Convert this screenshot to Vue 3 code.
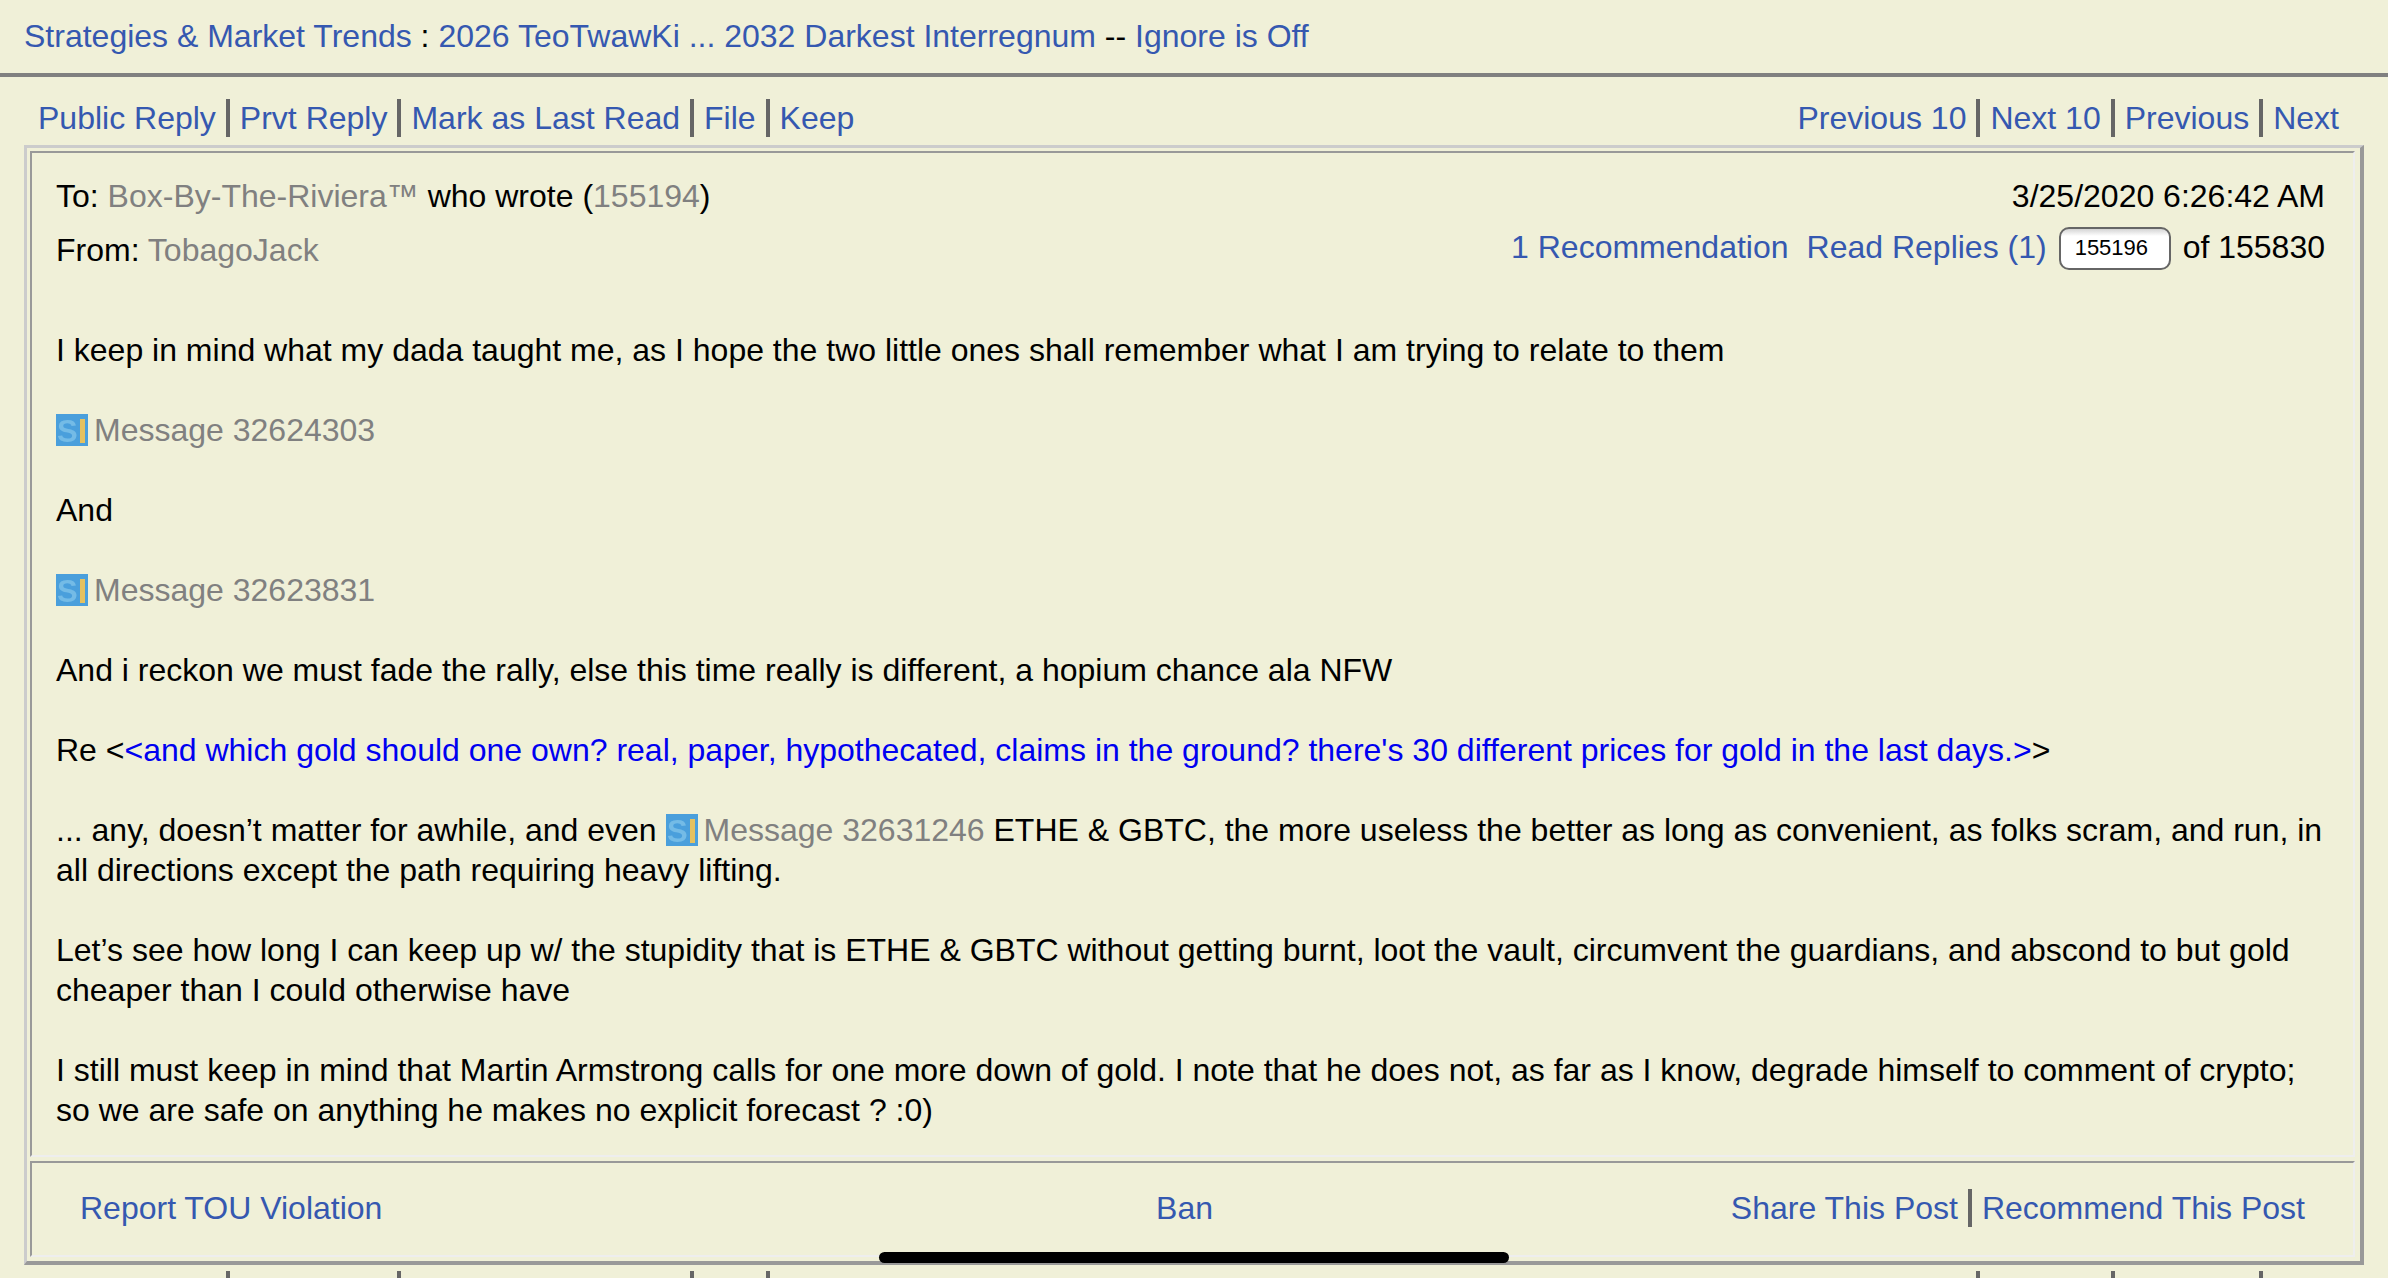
<script setup>
const leftLinks = ['Public Reply', 'Prvt Reply', 'Mark as Last Read', 'File', 'Keep']
const rightLinks = ['Previous 10', 'Next 10', 'Previous', 'Next']
</script>

<template>
  <div class="page">
    <header class="title">
      <a>Strategies &amp; Market Trends</a> : <a>2026 TeoTwawKi ... 2032 Darkest Interregnum</a> -- <a>Ignore is Off</a>
    </header>

    <nav class="toolbar">
      <div class="links">
        <template v-for="(l, i) in leftLinks" :key="l">
          <i v-if="i" class="sep"></i><a>{{ l }}</a>
        </template>
      </div>
      <div class="links">
        <template v-for="(l, i) in rightLinks" :key="l">
          <i v-if="i" class="sep"></i><a>{{ l }}</a>
        </template>
      </div>
    </nav>

    <section class="box">
      <article class="cell message">
        <div class="meta">
          <div class="meta-left">
            <div class="to">To: <span class="gray">Box-By-The-Riviera™</span> who wrote (<span class="gray">155194</span>)</div>
            <div class="from">From: <span class="gray">TobagoJack</span></div>
          </div>
          <div class="meta-right">
            <div class="date">3/25/2020 6:26:42 AM</div>
            <div class="rec">
              <a>1 Recommendation</a>
              <a class="replies">Read Replies (1)</a>
              <input class="msgno" value="155196" readonly />
              <span>of 155830</span>
            </div>
          </div>
        </div>

        <div class="body">
          <p>I keep in mind what my dada taught me, as I hope the two little ones shall remember what I am trying to relate to them</p>
          <p><svg class="si" viewBox="0 0 32 32"><rect width="32" height="32" fill="#4a9fdc"/><g class="si-g"><text x="1" y="28" class="si-s">S</text><rect x="24" y="5" width="5" height="24" fill="#e5c15f"/></g></svg><span class="gray">Message 32624303</span></p>
          <p>And</p>
          <p><svg class="si" viewBox="0 0 32 32"><rect width="32" height="32" fill="#4a9fdc"/><g class="si-g"><text x="1" y="28" class="si-s">S</text><rect x="24" y="5" width="5" height="24" fill="#e5c15f"/></g></svg><span class="gray">Message 32623831</span></p>
          <p>And i reckon we must fade the rally, else this time really is different, a hopium chance ala NFW</p>
          <p>Re &lt;<span class="quote">&lt;and which gold should one own? real, paper, hypothecated, claims in the ground? there's 30 different prices for gold in the last days.&gt;</span>&gt;</p>
          <p>... any, doesn’t matter for awhile, and even <svg class="si" viewBox="0 0 32 32"><rect width="32" height="32" fill="#4a9fdc"/><g class="si-g"><text x="1" y="28" class="si-s">S</text><rect x="24" y="5" width="5" height="24" fill="#e5c15f"/></g></svg><span class="gray">Message 32631246</span> ETHE &amp; GBTC, the more useless the better as long as convenient, as folks scram, and run, in all directions except the path requiring heavy lifting.</p>
          <p>Let’s see how long I can keep up w/ the stupidity that is ETHE &amp; GBTC without getting burnt, loot the vault, circumvent the guardians, and abscond to but gold cheaper than I could otherwise have</p>
          <p>I still must keep in mind that Martin Armstrong calls for one more down of gold. I note that he does not, as far as I know, degrade himself to comment of crypto; so we are safe on anything he makes no explicit forecast ? :0)</p>
        </div>
      </article>

      <footer class="cell actions">
        <a class="report">Report TOU Violation</a>
        <a class="ban">Ban</a>
        <div class="links share">
          <a>Share This Post</a><i class="sep"></i><a>Recommend This Post</a>
        </div>
      </footer>
    </section>

    <nav class="toolbar bottom">
      <div class="links">
        <template v-for="(l, i) in leftLinks" :key="l">
          <i v-if="i" class="sep"></i><a>{{ l }}</a>
        </template>
      </div>
      <div class="links">
        <template v-for="(l, i) in rightLinks" :key="l">
          <i v-if="i" class="sep"></i><a>{{ l }}</a>
        </template>
      </div>
    </nav>

    <div class="home-indicator"></div>
  </div>
</template>

<style>
html, body { margin: 0; background: #f0f0d8; }
</style>

<style scoped>
.page {
  position: relative;
  height: 1278px;
  overflow: hidden;
  background: #f0f0d8;
  color: #000;
  font: 32px/40px "Liberation Sans", Arial, sans-serif;
}
a { color: #3558b0; }
.gray { color: #808080; }
.quote { color: #0000f0; }

.title {
  height: 73px;
  padding-left: 24px;
  line-height: 73px;
  border-bottom: 4px solid #808080;
  white-space: nowrap;
}

.toolbar {
  display: flex;
  justify-content: space-between;
  align-items: flex-start;
  height: 68px;
  padding: 21px 49px 0 38px;
  box-sizing: border-box;
}
.links { display: flex; align-items: center; white-space: nowrap; }
.sep {
  width: 4px;
  height: 38px;
  margin: 0 10px;
  background: #666;
  flex: none;
}

.box {
  margin: 0 24px;
  height: 1120px;
  box-sizing: border-box;
  border-style: solid;
  border-width: 3px 4px 4px 3px;
  border-color: #ccc #999 #999 #ccc;
  padding: 3px 5px 4px 3px;
  display: flex;
  flex-direction: column;
  gap: 4px;
}
.cell {
  border-style: solid;
  border-width: 2px;
  border-color: #999 #eee #eee #999;
}
.message {
  height: 1006px;
  box-sizing: border-box;
  padding: 23px 28px 0 24px;
}
.meta { display: flex; justify-content: space-between; }
.from { margin-top: 14px; }
.meta-right { display: flex; flex-direction: column; align-items: flex-end; }
.rec { display: flex; align-items: center; margin-top: 9px; height: 43px; }
.replies { margin-left: 18px; }
.msgno {
  width: 112px;
  height: 43px;
  box-sizing: border-box;
  margin: 3px 12px 0 12px;
  padding: 0 14px;
  border: 2px solid #666;
  border-radius: 10px;
  background: linear-gradient(#d4d4d4, #fff 7px);
  font: 22px "Liberation Sans", Arial, sans-serif;
  color: #000;
  outline: none;
}

.body { margin-top: 60px; }
.body p { margin: 0 0 40px; }
.si { width: 32px; height: 32px; margin-right: 6px; vertical-align: -5px; overflow: visible; }
.si-g { filter: blur(0.7px); }
.si-s { font: 700 31px "Liberation Sans", Arial, sans-serif; fill: #74bbe6; }

.actions {
  flex: 1;
  display: grid;
  grid-template-columns: 1fr auto 1fr;
  align-items: center;
  padding: 0 48px 2px 48px;
}
.ban { margin-right: 16px; }
.share { justify-self: end; }

.bottom {
  margin-top: 5px;
  padding-top: 0;
}
.bottom a { visibility: hidden; }

.home-indicator {
  position: absolute;
  left: 879px;
  top: 1252px;
  width: 630px;
  height: 11px;
  border-radius: 6px;
  background: #000;
}
</style>
